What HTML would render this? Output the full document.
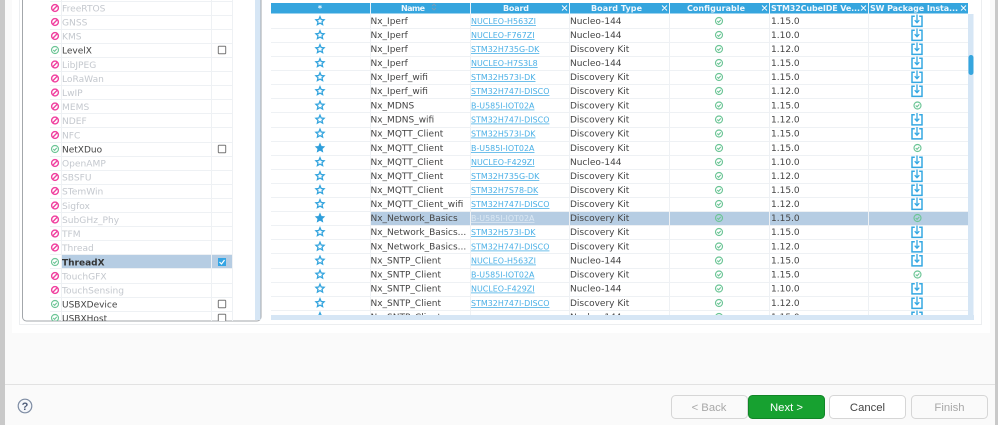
<!DOCTYPE html>
<html><head><meta charset="utf-8">
<style>
html,body{margin:0;padding:0;width:998px;height:425px;overflow:hidden;background:#fafafa}
svg{display:block;filter:blur(.35px)}
text{font-family:"DejaVu Sans",sans-serif}
.n{font-size:9px;fill:#444}
.g{font-size:9.1px;fill:#c4c8ce}
.l{font-size:7.95px;fill:#4bb0e6;text-decoration:underline}
.h{font-size:8px;font-weight:bold;fill:#eef7fd}
.b{font-family:"Liberation Sans",sans-serif;font-size:11.3px;text-anchor:middle}
</style></head><body>
<svg width="998" height="425" viewBox="0 0 998 425" xmlns="http://www.w3.org/2000/svg">
<defs>
<g id="s"><path d="M0-4.3 1.2-1.5 4.1-1.2 2 .8 2.6 3.6 0 2.1-2.6 3.6-2 .8-4.1-1.2-1.200-1.500Z" fill="#fff" stroke="#35a5de" stroke-width="1.300"/></g>
<g id="f"><path d="M0-4.3 1.2-1.5 4.1-1.2 2 .8 2.6 3.6 0 2.1-2.6 3.6-2 .8-4.1-1.2-1.200-1.500Z" fill="#2f9fdb" stroke="#2f9fdb" stroke-width="1"/></g>
<g id="c"><circle r="3.500" fill="none" stroke="#6cc596" stroke-width="1.150"/><path d="M-1.800 0-.4 1.300 1.800-1.100" fill="none" stroke="#6cc596" stroke-width="1.100"/></g>
<g id="p"><circle r="3.400" fill="none" stroke="#f0409f" stroke-width="1.400"/><path d="M-2.200 2.200 2.200-2.200" stroke="#f0409f" stroke-width="1.400"/></g>
<g id="d"><path d="M-2.200-4.800H-5V5.400H5V-4.800H2.200" fill="none" stroke="#35a8e2" stroke-width="1.500"/><path d="M0-6.500V1.400M-2.300-.8 0 1.700 2.300-.8" fill="none" stroke="#35a8e2" stroke-width="1.300"/></g>
<g id="k"><rect x="-3.700" y="-3.700" width="7.400" height="7.400" rx=".6" fill="#fff" stroke="#777" stroke-width="1"/></g>
<clipPath id="tc"><rect x="271" y="14" width="697" height="301"/></clipPath>
<clipPath id="lc"><rect x="23" y="0" width="232" height="321"/></clipPath>
</defs>

<rect width="998" height="425" fill="#fafafa"/>
<rect x="0" y="0" width="5" height="425" fill="#c9c9c9"/>
<rect x="995" y="0" width="3" height="425" fill="#c9c9c9"/>
<rect x="12" y="0" width="978" height="333" fill="#fff"/>
<path d="M19.500 0V324.500H981.500V0" fill="none" stroke="#eceef0"/>
<path d="M5 384.500H995" stroke="#e2e2e2"/>

<!-- left list -->
<path d="M22.500 0V317a4 4 0 0 0 4 4H257a4 4 0 0 0 4-4V0" fill="#fff" stroke="#a3a7ab"/>
<rect x="255" y="0" width="5.500" height="320" fill="#d6e6f5"/>
<rect x="62" y="255" width="171" height="14" fill="#b6cde3"/>
<g clip-path="url(#lc)">
<path d="M50 1.500H232M50 15.500H232M50 29.500H232M50 43.500H232M50 57.500H232M50 71.500H232M50 85.500H232M50 99.500H232M50 113.500H232M50 127.500H232M50 142.500H232M50 156.500H232M50 170.500H232M50 184.500H232M50 198.500H232M50 212.500H232M50 226.500H232M50 240.500H232M50 254.500H232M50 268.500H232M50 283.500H232M50 297.500H232M50 311.500H232" stroke="#eef1f4"/>
<path d="M61.500 0V321M211.500 0V321M232.500 0V321" stroke="#eef1f4"/>
<use href="#p" x="55" y="8"/><text class="g" x="62" y="11.500">FreeRTOS</text>
<use href="#p" x="55" y="22"/><text class="g" x="62" y="25.500">GNSS</text>
<use href="#p" x="55" y="36"/><text class="g" x="62" y="39.500">KMS</text>
<use href="#c" x="55" y="50"/><text class="n" x="62" y="53.500">LevelX</text><use href="#k" x="222" y="50"/>
<use href="#p" x="55" y="64.500"/><text class="g" x="62" y="68">LibJPEG</text>
<use href="#p" x="55" y="78.500"/><text class="g" x="62" y="82">LoRaWan</text>
<use href="#p" x="55" y="92.500"/><text class="g" x="62" y="96">LwIP</text>
<use href="#p" x="55" y="106.500"/><text class="g" x="62" y="110">MEMS</text>
<use href="#p" x="55" y="120.500"/><text class="g" x="62" y="124">NDEF</text>
<use href="#p" x="55" y="135"/><text class="g" x="62" y="138.500">NFC</text>
<use href="#c" x="55" y="149"/><text class="n" x="62" y="152.500">NetXDuo</text><use href="#k" x="222" y="149"/>
<use href="#p" x="55" y="163"/><text class="g" x="62" y="166.500">OpenAMP</text>
<use href="#p" x="55" y="177"/><text class="g" x="62" y="180.500">SBSFU</text>
<use href="#p" x="55" y="191"/><text class="g" x="62" y="194.500">STemWin</text>
<use href="#p" x="55" y="205.500"/><text class="g" x="62" y="209">Sigfox</text>
<use href="#p" x="55" y="219.500"/><text class="g" x="62" y="223">SubGHz_Phy</text>
<use href="#p" x="55" y="233.500"/><text class="g" x="62" y="237">TFM</text>
<use href="#p" x="55" y="247.500"/><text class="g" x="62" y="251">Thread</text>
<use href="#c" x="55" y="262"/><text class="n" x="62" y="265.500" style="font-weight:bold;fill:#333">ThreadX</text>
<rect x="218" y="258" width="8" height="8" fill="#35a5e4"/><path d="M219.500 262 221.500 264 224.500 260" fill="none" stroke="#fff" stroke-width="1.200"/>
<use href="#p" x="55" y="276"/><text class="g" x="62" y="279.500">TouchGFX</text>
<use href="#p" x="55" y="290"/><text class="g" x="62" y="293.500">TouchSensing</text>
<use href="#c" x="55" y="304"/><text class="n" x="62" y="307.500">USBXDevice</text><use href="#k" x="222" y="304"/>
<use href="#c" x="55" y="318"/><text class="n" x="62" y="321.500">USBXHost</text><use href="#k" x="222" y="318"/>
</g>

<!-- table header -->
<rect x="271" y="3" width="697" height="10.500" fill="#35a5de"/>
<path d="M370.500 3V14M470.500 3V14M569.500 3V14M669.500 3V14M769.500 3V14M868.500 3V14" stroke="#e8f3fb"/>
<text class="h" x="320" y="11" text-anchor="middle">*</text>
<text class="h" x="401" y="11" textLength="24">Name</text><path d="M432 6 434 4 436 6M432 8 434 10 436 8" fill="none" stroke="#7d9cb5" stroke-width=".9"/>
<text class="h" x="503" y="11" textLength="26">Board</text>
<text class="h" x="591" y="11" textLength="51">Board Type</text>
<text class="h" x="687" y="11" textLength="58">Configurable</text>
<text class="h" x="771" y="11" textLength="89">STM32CubeIDE Ve...</text>
<text class="h" x="870" y="11" textLength="88">SW Package Insta...</text>
<g stroke="#fff" stroke-width=".9"><path d="M562 5.500 567 10.500M567 5.500 562 10.500M662 5.500 667 10.500M667 5.500 662 10.500M762 5.500 767 10.500M767 5.500 762 10.500M861 5.500 866 10.500M866 5.500 861 10.500M961 5.500 966 10.500M966 5.500 961 10.500"/></g>

<!-- table body -->
<rect x="968" y="14" width="5.500" height="301" fill="#d6e6f5"/>
<rect x="968.500" y="55" width="5" height="20" rx="2.500" fill="#35a5de"/>
<rect x="271" y="315" width="703" height="5" fill="#d6e6f5"/>
<rect x="370" y="211.500" width="598" height="14" fill="#b6cde3"/>
<g clip-path="url(#tc)">
<path d="M271 28.500H968M271 42.500H968M271 56.500H968M271 70.500H968M271 84.500H968M271 98.500H968M271 112.500H968M271 127.500H968M271 141.500H968M271 155.500H968M271 169.500H968M271 183.500H968M271 197.500H968M271 211.500H968M271 225.500H968M271 239.500H968M271 253.500H968M271 268.500H968M271 282.500H968M271 296.500H968M271 310.500H968" stroke="#eef1f4"/>
<path d="M370.500 14V315M470.500 14V315M569.500 14V315M669.500 14V315M769.500 14V315M868.500 14V315" stroke="#eef1f4"/>

<use href="#s" x="320" y="21"/><text class="n" x="370.500" y="24">Nx_Iperf</text><text class="l" x="471" y="24">NUCLEO-H563ZI</text><text class="n" x="570" y="24">Nucleo-144</text><use href="#c" x="719" y="21"/><text class="n" x="771" y="24">1.15.0</text><use href="#d" x="917" y="21"/>
<use href="#s" x="320" y="35"/><text class="n" x="370.500" y="38">Nx_Iperf</text><text class="l" x="471" y="38">NUCLEO-F767ZI</text><text class="n" x="570" y="38">Nucleo-144</text><use href="#c" x="719" y="35"/><text class="n" x="771" y="38">1.10.0</text><use href="#d" x="917" y="35"/>
<use href="#s" x="320" y="49"/><text class="n" x="370.500" y="52">Nx_Iperf</text><text class="l" x="471" y="52">STM32H735G-DK</text><text class="n" x="570" y="52">Discovery Kit</text><use href="#c" x="719" y="49"/><text class="n" x="771" y="52">1.12.0</text><use href="#d" x="917" y="49"/>
<use href="#s" x="320" y="63"/><text class="n" x="370.500" y="66">Nx_Iperf</text><text class="l" x="471" y="66">NUCLEO-H7S3L8</text><text class="n" x="570" y="66">Nucleo-144</text><use href="#c" x="719" y="63"/><text class="n" x="771" y="66">1.15.0</text><use href="#d" x="917" y="63"/>
<use href="#s" x="320" y="77"/><text class="n" x="370.500" y="80">Nx_Iperf_wifi</text><text class="l" x="471" y="80">STM32H573I-DK</text><text class="n" x="570" y="80">Discovery Kit</text><use href="#c" x="719" y="77"/><text class="n" x="771" y="80">1.15.0</text><use href="#d" x="917" y="77"/>
<use href="#s" x="320" y="91"/><text class="n" x="370.500" y="94">Nx_Iperf_wifi</text><text class="l" x="471" y="94">STM32H747I-DISCO</text><text class="n" x="570" y="94">Discovery Kit</text><use href="#c" x="719" y="91"/><text class="n" x="771" y="94">1.12.0</text><use href="#d" x="917" y="91"/>
<use href="#s" x="320" y="105.500"/><text class="n" x="370.500" y="108.500">Nx_MDNS</text><text class="l" x="471" y="108.500">B-U585I-IOT02A</text><text class="n" x="570" y="108.500">Discovery Kit</text><use href="#c" x="719" y="105.500"/><text class="n" x="771" y="108.500">1.15.0</text><use href="#c" x="917.500" y="105.500"/>
<use href="#s" x="320" y="119.500"/><text class="n" x="370.500" y="122.500">Nx_MDNS_wifi</text><text class="l" x="471" y="122.500">STM32H747I-DISCO</text><text class="n" x="570" y="122.500">Discovery Kit</text><use href="#c" x="719" y="119.500"/><text class="n" x="771" y="122.500">1.12.0</text><use href="#d" x="917" y="119.500"/>
<use href="#s" x="320" y="133.500"/><text class="n" x="370.500" y="136.500">Nx_MQTT_Client</text><text class="l" x="471" y="136.500">STM32H573I-DK</text><text class="n" x="570" y="136.500">Discovery Kit</text><use href="#c" x="719" y="133.500"/><text class="n" x="771" y="136.500">1.15.0</text><use href="#d" x="917" y="133.500"/>
<use href="#f" x="320" y="148"/><text class="n" x="370.500" y="151">Nx_MQTT_Client</text><text class="l" x="471" y="151">B-U585I-IOT02A</text><text class="n" x="570" y="151">Discovery Kit</text><use href="#c" x="719" y="148"/><text class="n" x="771" y="151">1.15.0</text><use href="#c" x="917.500" y="148"/>
<use href="#s" x="320" y="162"/><text class="n" x="370.500" y="165">Nx_MQTT_Client</text><text class="l" x="471" y="165">NUCLEO-F429ZI</text><text class="n" x="570" y="165">Nucleo-144</text><use href="#c" x="719" y="162"/><text class="n" x="771" y="165">1.10.0</text><use href="#d" x="917" y="162"/>
<use href="#s" x="320" y="176"/><text class="n" x="370.500" y="179">Nx_MQTT_Client</text><text class="l" x="471" y="179">STM32H735G-DK</text><text class="n" x="570" y="179">Discovery Kit</text><use href="#c" x="719" y="176"/><text class="n" x="771" y="179">1.12.0</text><use href="#d" x="917" y="176"/>
<use href="#s" x="320" y="190"/><text class="n" x="370.500" y="193">Nx_MQTT_Client</text><text class="l" x="471" y="193">STM32H7S78-DK</text><text class="n" x="570" y="193">Discovery Kit</text><use href="#c" x="719" y="190"/><text class="n" x="771" y="193">1.15.0</text><use href="#d" x="917" y="190"/>
<use href="#s" x="320" y="204"/><text class="n" x="370.500" y="207">Nx_MQTT_Client_wifi</text><text class="l" x="471" y="207">STM32H747I-DISCO</text><text class="n" x="570" y="207">Discovery Kit</text><use href="#c" x="719" y="204"/><text class="n" x="771" y="207">1.12.0</text><use href="#d" x="917" y="204"/>
<use href="#f" x="320" y="218"/><text class="n" x="370.500" y="221">Nx_Network_Basics</text><text class="l" x="471" y="221" style="fill:#dbe8f3">B-U585I-IOT02A</text><text class="n" x="570" y="221">Discovery Kit</text><use href="#c" x="719" y="218"/><text class="n" x="771" y="221">1.15.0</text><use href="#c" x="917.500" y="218"/>
<use href="#s" x="320" y="232"/><text class="n" x="370.500" y="235">Nx_Network_Basics...</text><text class="l" x="471" y="235">STM32H573I-DK</text><text class="n" x="570" y="235">Discovery Kit</text><use href="#c" x="719" y="232"/><text class="n" x="771" y="235">1.15.0</text><use href="#d" x="917" y="232"/>
<use href="#s" x="320" y="246.500"/><text class="n" x="370.500" y="249.500">Nx_Network_Basics...</text><text class="l" x="471" y="249.500">STM32H747I-DISCO</text><text class="n" x="570" y="249.500">Discovery Kit</text><use href="#c" x="719" y="246.500"/><text class="n" x="771" y="249.500">1.12.0</text><use href="#d" x="917" y="246.500"/>
<use href="#s" x="320" y="260.500"/><text class="n" x="370.500" y="263.500">Nx_SNTP_Client</text><text class="l" x="471" y="263.500">NUCLEO-H563ZI</text><text class="n" x="570" y="263.500">Nucleo-144</text><use href="#c" x="719" y="260.500"/><text class="n" x="771" y="263.500">1.15.0</text><use href="#d" x="917" y="260.500"/>
<use href="#s" x="320" y="274.500"/><text class="n" x="370.500" y="277.500">Nx_SNTP_Client</text><text class="l" x="471" y="277.500">B-U585I-IOT02A</text><text class="n" x="570" y="277.500">Discovery Kit</text><use href="#c" x="719" y="274.500"/><text class="n" x="771" y="277.500">1.15.0</text><use href="#c" x="917.500" y="274.500"/>
<use href="#s" x="320" y="288.500"/><text class="n" x="370.500" y="291.500">Nx_SNTP_Client</text><text class="l" x="471" y="291.500">NUCLEO-F429ZI</text><text class="n" x="570" y="291.500">Nucleo-144</text><use href="#c" x="719" y="288.500"/><text class="n" x="771" y="291.500">1.10.0</text><use href="#d" x="917" y="288.500"/>
<use href="#s" x="320" y="303"/><text class="n" x="370.500" y="306">Nx_SNTP_Client</text><text class="l" x="471" y="306">STM32H747I-DISCO</text><text class="n" x="570" y="306">Discovery Kit</text><use href="#c" x="719" y="303"/><text class="n" x="771" y="306">1.12.0</text><use href="#d" x="917" y="303"/>
<use href="#s" x="320" y="317"/><text class="n" x="370.500" y="320">Nx_SNTP_Client</text><text class="n" x="570" y="320">Nucleo-144</text><use href="#c" x="719" y="317"/><text class="n" x="771" y="320">1.15.0</text><use href="#d" x="917" y="317"/>
</g>

<!-- help -->
<circle cx="25" cy="406" r="6.800" fill="#f4f6fa" stroke="#7e8ca3" stroke-width="1.200"/>
<text x="25" y="410" text-anchor="middle" style="font-size:11px;font-weight:bold;fill:#4c5b78;font-family:'Liberation Sans',sans-serif">?</text>

<!-- buttons -->
<rect x="671.500" y="395.500" width="76" height="23" rx="4" fill="#fafafa" stroke="#d6d6d6"/>
<text class="b" x="709" y="411" fill="#a8a8a8">&lt; Back</text>
<rect x="748.500" y="395.500" width="76" height="23" rx="4" fill="#17a130" stroke="#118527"/>
<text class="b" x="786.500" y="411" fill="#fff">Next &gt;</text>
<rect x="829.500" y="395.500" width="76" height="23" rx="4" fill="#fff" stroke="#d6d6d6"/>
<text class="b" x="867.500" y="411" fill="#444">Cancel</text>
<rect x="911.500" y="395.500" width="76" height="23" rx="4" fill="#fafafa" stroke="#d6d6d6"/>
<text class="b" x="949.500" y="411" fill="#a8a8a8">Finish</text>
</svg>
</body></html>
